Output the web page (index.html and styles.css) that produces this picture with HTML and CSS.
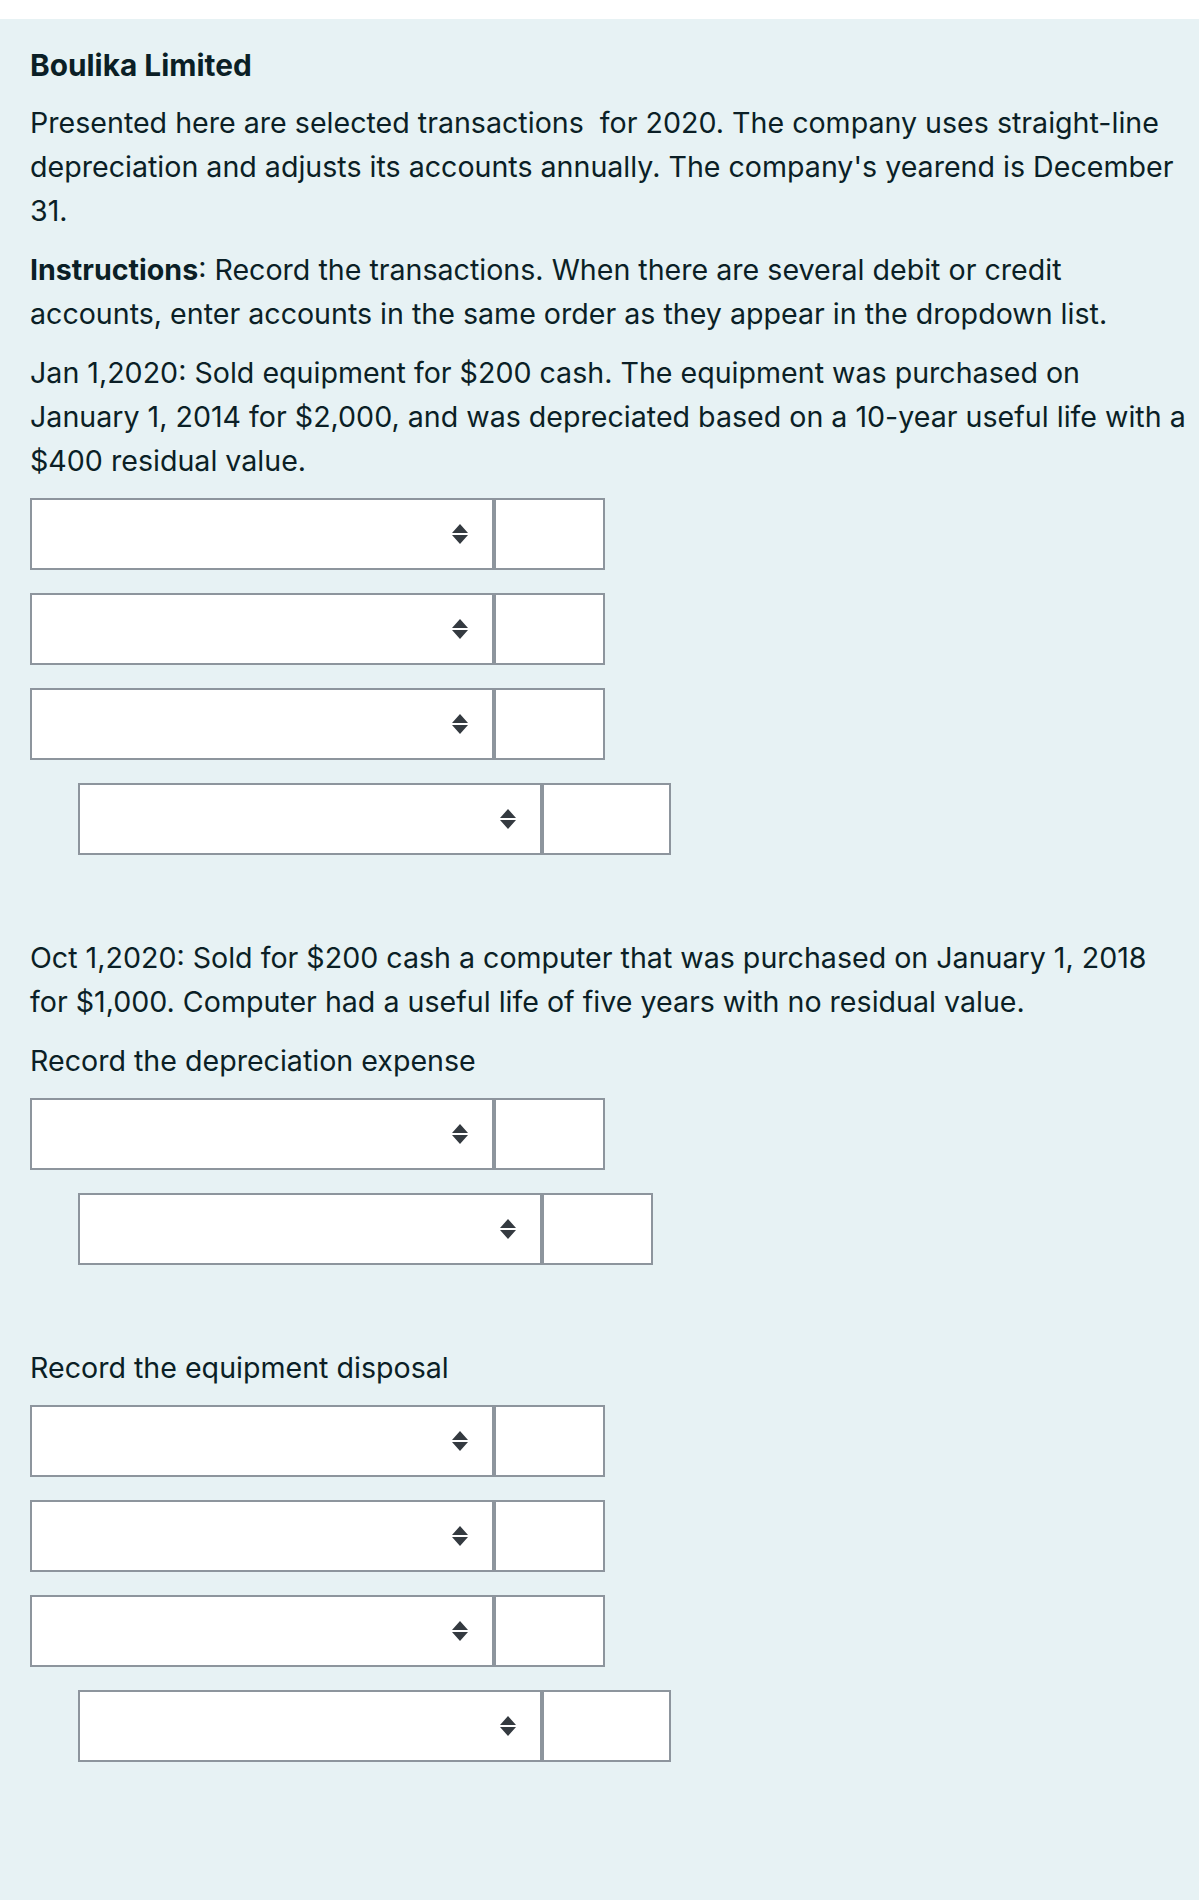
FILE: index.html
```html
<!DOCTYPE html>
<html lang="en">
<head>
<meta charset="utf-8">
<title>Boulika Limited</title>
<link rel="stylesheet" href="styles.css">
</head>
<body>
<div class="topbar"></div>
<main class="panel">
  <h1 class="title">Boulika Limited</h1>
  <p>Presented here are selected transactions&nbsp; for 2020. The company uses straight-line depreciation and adjusts its accounts annually. The company's yearend is December 31.</p>
  <p><strong>Instructions</strong>: Record the transactions. When there are several debit or credit accounts, enter accounts in the same order as they appear in the dropdown list.</p>
  <p>Jan 1,2020: Sold equipment for $200 cash. The equipment was purchased on January 1, 2014 for $2,000, and was depreciated based on a 10-year useful life with a $400 residual value.</p>

  <div class="entries">
    <div class="entry"><div class="account"><svg class="arrows" viewBox="0 0 16 20"><path d="M8 0 L16 9 H0 Z M0 11 H16 L8 20 Z"/></svg></div><div class="amount"></div></div>
    <div class="entry"><div class="account"><svg class="arrows" viewBox="0 0 16 20"><path d="M8 0 L16 9 H0 Z M0 11 H16 L8 20 Z"/></svg></div><div class="amount"></div></div>
    <div class="entry"><div class="account"><svg class="arrows" viewBox="0 0 16 20"><path d="M8 0 L16 9 H0 Z M0 11 H16 L8 20 Z"/></svg></div><div class="amount"></div></div>
    <div class="entry credit"><div class="account"><svg class="arrows" viewBox="0 0 16 20"><path d="M8 0 L16 9 H0 Z M0 11 H16 L8 20 Z"/></svg></div><div class="amount wide"></div></div>
  </div>

  <p>Oct 1,2020: Sold for $200 cash a computer that was purchased on January 1, 2018 for $1,000. Computer had a useful life of five years with no residual value.</p>
  <p class="lead">Record the depreciation expense</p>

  <div class="entries">
    <div class="entry"><div class="account"><svg class="arrows" viewBox="0 0 16 20"><path d="M8 0 L16 9 H0 Z M0 11 H16 L8 20 Z"/></svg></div><div class="amount"></div></div>
    <div class="entry credit"><div class="account"><svg class="arrows" viewBox="0 0 16 20"><path d="M8 0 L16 9 H0 Z M0 11 H16 L8 20 Z"/></svg></div><div class="amount"></div></div>
  </div>

  <p class="lead">Record the equipment disposal</p>

  <div class="entries">
    <div class="entry"><div class="account"><svg class="arrows" viewBox="0 0 16 20"><path d="M8 0 L16 9 H0 Z M0 11 H16 L8 20 Z"/></svg></div><div class="amount"></div></div>
    <div class="entry"><div class="account"><svg class="arrows" viewBox="0 0 16 20"><path d="M8 0 L16 9 H0 Z M0 11 H16 L8 20 Z"/></svg></div><div class="amount"></div></div>
    <div class="entry"><div class="account"><svg class="arrows" viewBox="0 0 16 20"><path d="M8 0 L16 9 H0 Z M0 11 H16 L8 20 Z"/></svg></div><div class="amount"></div></div>
    <div class="entry credit"><div class="account"><svg class="arrows" viewBox="0 0 16 20"><path d="M8 0 L16 9 H0 Z M0 11 H16 L8 20 Z"/></svg></div><div class="amount wide"></div></div>
  </div>
</main>
</body>
</html>
```

FILE: styles.css
```css
html, body {
  margin: 0;
  padding: 0;
  background: #ffffff;
}

body {
  font-family: Inter, "Noto Sans", "Liberation Sans", sans-serif;
  color: #0b1f26;
  font-size: 28.6px;
  line-height: 44px;
}

.topbar {
  height: 19px;
  background: #ffffff;
}

.panel {
  background: #e7f2f4;
  box-sizing: border-box;
  min-height: 1881px;
  padding: 24px 11px 40px 30px;
}

.title {
  margin: 0 0 14px;
  font-size: 29.8px;
  line-height: 44px;
  font-weight: 700;
}

p {
  margin: 0 0 15px;
}

p strong {
  font-weight: 700;
}

.entries {
  display: flex;
  flex-direction: column;
  gap: 23px;
  margin: 0 0 81px;
}

.lead + .entries {
  margin-top: 1px;
}

.entry {
  display: flex;
  height: 72px;
}

.entry.credit {
  margin-left: 48px;
}

.account {
  box-sizing: border-box;
  width: 464px;
  height: 100%;
  background: #ffffff;
  border: 2px solid #8d959d;
  display: flex;
  align-items: center;
  justify-content: flex-end;
  padding-right: 24px;
}

.arrows {
  width: 16px;
  height: 20px;
  fill: #343a40;
}

.amount {
  box-sizing: border-box;
  width: 111px;
  height: 100%;
  background: #ffffff;
  border: 2px solid #8d959d;
}

.amount.wide {
  width: 129px;
}
```
